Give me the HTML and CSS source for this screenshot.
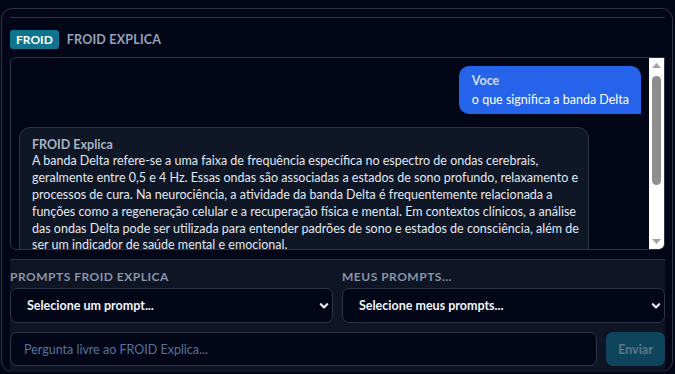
FILE: index.html
```html
<!DOCTYPE html>
<html lang="pt-BR">
<head>
<meta charset="utf-8">
<title>FROID Explica</title>
<link rel="stylesheet" href="styles.css">
</head>
<body>
<div class="card">
  <div class="topline"></div>
  <div class="header">
    <span class="badge">FROID</span>
    <span class="title">FROID EXPLICA</span>
  </div>
  <div class="chat">
    <div class="messages">
      <div class="msg user">
        <div class="who">Voce</div>
        <div class="text">o que significa a banda Delta</div>
      </div>
      <div class="msg bot">
        <div class="who">FROID Explica</div>
        <div class="text">A banda Delta refere-se a uma faixa de frequência específica no espectro de ondas cerebrais,<br>geralmente entre 0,5 e 4 Hz. Essas ondas são associadas a estados de sono profundo, relaxamento e<br>processos de cura. Na neurociência, a atividade da banda Delta é frequentemente relacionada a<br>funções como a regeneração celular e a recuperação física e mental. Em contextos clínicos, a análise<br>das ondas Delta pode ser utilizada para entender padrões de sono e estados de consciência, além de<br>ser um indicador de saúde mental e emocional.</div>
      </div>
    </div>
    <div class="scrollbar">
      <div class="sb-btn"><svg width="9" height="5" viewBox="0 0 9 5"><polygon points="0,5 4.5,0 9,5" fill="#a3a3a3"/></svg></div>
      <div class="sb-track"><div class="sb-thumb"></div></div>
      <div class="sb-btn"><svg width="9" height="5" viewBox="0 0 9 5"><polygon points="0,0 9,0 4.5,5" fill="#a3a3a3"/></svg></div>
    </div>
  </div>
  <div class="panel">
    <div class="selects">
      <div class="field">
        <div class="label">PROMPTS FROID EXPLICA</div>
        <div class="select">
          <span>Selecione um prompt...</span>
          <svg class="chev" width="10" height="8" viewBox="0 0 10 8"><path d="M1.8 2.2 L5 5.4 L8.2 2.2" fill="none" stroke="#e5e7eb" stroke-width="2.2" stroke-linecap="round" stroke-linejoin="round"/></svg>
        </div>
      </div>
      <div class="field">
        <div class="label">MEUS PROMPTS...</div>
        <div class="select">
          <span>Selecione meus prompts...</span>
          <svg class="chev" width="10" height="8" viewBox="0 0 10 8"><path d="M1.8 2.2 L5 5.4 L8.2 2.2" fill="none" stroke="#e5e7eb" stroke-width="2.2" stroke-linecap="round" stroke-linejoin="round"/></svg>
        </div>
      </div>
    </div>
    <div class="ask">
      <input class="input" type="text" placeholder="Pergunta livre ao FROID Explica...">
      <button class="send" type="button">Enviar</button>
    </div>
  </div>
</div>
</body>
</html>
```
FILE: styles.css
```css
html, body {
  margin: 0;
  padding: 0;
  background: #020617;
}
body {
  font-family: Lato, "Segoe UI", "Noto Sans", sans-serif;
  color: #e2e8f0;
  padding: 8px 2px 2px 1px;
  height: 374px;
  box-sizing: border-box;
}
.card {
  height: 364px;
  box-sizing: border-box;
  border: 1px solid #2b3547;
  border-radius: 11px;
  padding: 8px 7px 0 8px;
  display: flex;
  flex-direction: column;
}
.topline {
  border-top: 1px solid #2b3547;
}
.header {
  display: flex;
  align-items: center;
  gap: 8px;
  margin-top: 12px;
  height: 19px;
}
.badge {
  background: #0e7490;
  color: #fff;
  font-weight: 700;
  font-size: 12px;
  line-height: 19px;
  padding: 0 6px;
  border-radius: 3px;
}
.title {
  color: #94a3b8;
  font-weight: 700;
  font-size: 12.5px;
  letter-spacing: 0.2px;
}
.chat {
  margin-top: 8px;
  height: 193px;
  box-sizing: border-box;
  border: 1px solid #2b3547;
  border-radius: 6px 0 6px 6px;
  overflow: hidden;
  flex: none;
  display: flex;
}
.messages {
  flex: 1;
  overflow: hidden;
  padding: 8px 8px 0 8px;
  display: flex;
  flex-direction: column;
  gap: 13px;
}
.scrollbar {
  width: 15px;
  flex: none;
  background: #fff;
  display: flex;
  flex-direction: column;
}
.sb-btn {
  height: 15px;
  flex: none;
  display: flex;
  align-items: center;
  justify-content: center;
}
.sb-btn svg {
  display: block;
}
.sb-track {
  flex: 1;
  padding: 3px;
}
.sb-thumb {
  height: 109px;
  background: #8e8e8e;
  border-radius: 5px;
}
.msg {
  font-size: 12.5px;
  line-height: 16.8px;
}
.who {
  font-weight: 700;
}
.user {
  align-self: flex-end;
  background: #2563eb;
  border-radius: 10px 10px 0 10px;
  padding: 7px 12px 5px 13px;
  color: #fff;
}
.user .who {
  color: #d3dcf5;
  margin-bottom: 2px;
}
.bot {
  align-self: flex-start;
  width: 570px;
  flex: none;
  box-sizing: border-box;
  background: #0f1626;
  border: 1px solid #2b3547;
  border-radius: 11px;
  padding: 9px 12px 9px 12px;
  color: #e2e8f0;
  white-space: nowrap;
}
.bot .who {
  color: #a9b3c2;
}
.panel {
  margin-top: 9px;
  flex: 1;
  background: #0f1524;
  border-top: 1px solid #2b3547;
  padding: 8px 0 6px 0;
  display: flex;
  flex-direction: column;
  gap: 9px;
}
.selects {
  display: grid;
  grid-template-columns: 1fr 1fr;
  gap: 9px;
}
.label {
  color: #8894a8;
  font-weight: 700;
  font-size: 12px;
  letter-spacing: 0.5px;
  line-height: 17px;
  margin-bottom: 3px;
}
.select {
  height: 35px;
  box-sizing: border-box;
  background: #020617;
  border: 1px solid #2b3547;
  border-radius: 7px;
  display: flex;
  align-items: center;
  justify-content: space-between;
  padding: 0 3px 0 16px;
  color: #f1f5f9;
  font-weight: 700;
  font-size: 12.5px;
}
.chev {
  display: block;
}
.ask {
  display: flex;
  gap: 9px;
}
.input {
  flex: 1;
  height: 34px;
  box-sizing: border-box;
  background: #020617;
  border: 1px solid #2b3547;
  border-radius: 7px;
  padding: 0 13px;
  font-family: Lato, "Segoe UI", "Noto Sans", sans-serif;
  font-size: 12.5px;
  color: #e2e8f0;
  outline: none;
}
.input::placeholder {
  color: #56749a;
}
.send {
  width: 59px;
  height: 34px;
  border: none;
  border-radius: 7px;
  background: #0f455c;
  color: #5e7484;
  font-family: Lato, "Segoe UI", "Noto Sans", sans-serif;
  font-weight: 700;
  font-size: 12.5px;
  padding: 0;
}
```
